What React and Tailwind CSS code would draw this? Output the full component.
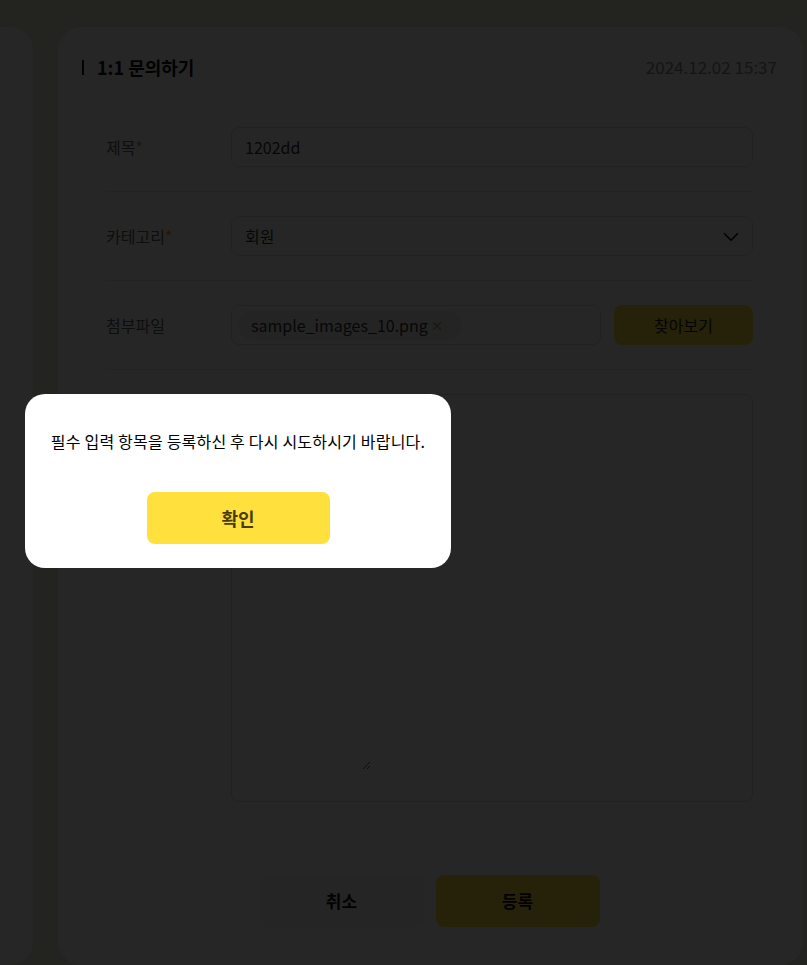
import React from "react";
import { ChevronDown, X } from "lucide-react";

const font = { fontFamily: '"Noto Sans CJK KR", "Noto Sans", sans-serif' };

const Label = ({ children, required }) => (
  <div className="w-[125px] shrink-0 text-[16px] text-[#5e5e5e]">
    {children}
    {required && <span className="text-[#f08c00]">*</span>}
  </div>
);

export default function App() {
  return (
    <div
      className="relative h-[965px] overflow-hidden bg-[#e9f0cf]"
      style={font}
    >
      <div className="flex gap-[25px] pt-[27px] h-full">
        {/* sidebar card (cut off) */}
        <div className="w-[233px] -ml-[200px] shrink-0 rounded-[24px] bg-white" />

        {/* main card */}
        <div className="w-[745px] shrink-0 rounded-[24px] bg-white pl-[24px] pr-[26px] pt-[28px]">
          <div className="flex items-center justify-between h-[24px]">
            <div className="flex items-center gap-[13px]">
              <span className="w-[2px] h-[15px] bg-[#111]" />
              <h2 className="text-[18px] font-semibold text-[#111] leading-none">
                1:1 문의하기
              </h2>
            </div>
            <span className="text-[17px] text-[#8a8a8a]">2024.12.02 15:37</span>
          </div>

          {/* form panel */}
          <div className="mt-[24px] w-[695px] rounded-2xl bg-white px-[24px] shadow-[0_0_6px_rgba(0,0,0,0.04)]">
            <div className="flex items-center py-[24px] border-b border-[#e6e6e6]">
              <Label required>제목</Label>
              <div className="flex-1 h-[40px] rounded-lg border border-[#dcdcdc] bg-white px-[13px] flex items-center text-[16px] text-[#333]">
                1202dd
              </div>
            </div>

            <div className="flex items-center py-[24px] border-b border-[#e6e6e6]">
              <Label required>카테고리</Label>
              <div className="relative flex-1 h-[40px] rounded-lg border border-[#dcdcdc] bg-white px-[13px] flex items-center text-[16px] text-[#333]">
                회원
                <ChevronDown
                  size={26}
                  strokeWidth={1.6}
                  className="absolute right-[8px] top-[7px] text-[#111]"
                />
              </div>
            </div>

            <div className="flex items-center py-[24px] border-b border-[#e6e6e6]">
              <Label>첨부파일</Label>
              <div className="flex-1 flex gap-[13px]">
                <div className="flex-1 h-[40px] rounded-lg border border-[#dcdcdc] bg-white px-[6px] flex items-center">
                  <span className="h-[29px] rounded-full bg-[#f2f2f2] pl-[13px] pr-[18px] flex items-center gap-[2px] text-[16px] text-[#333]">
                    sample_images_10.png
                    <X size={14} strokeWidth={1.8} className="text-[#5a9a2a] mt-[1px]" />
                  </span>
                </div>
                <button className="w-[139px] h-[40px] rounded-lg bg-[#ffe03c] text-[16px] text-[#222]">
                  찾아보기
                </button>
              </div>
            </div>

            <div className="flex items-start py-[24px]">
              <Label required>내용</Label>
              <div className="flex-1 h-[408px] rounded-lg border border-[#dcdcdc] bg-white">
                <textarea className="block w-[139px] h-[375px] bg-transparent outline-none border-0" />
              </div>
            </div>
          </div>

          <div className="mt-[49px] flex justify-center gap-[12px]">
            <button className="w-[164px] h-[52px] rounded-lg bg-[#f5f5f5] text-[17px] font-bold text-[#111]">
              취소
            </button>
            <button className="w-[164px] h-[52px] rounded-lg bg-[#ffe03c] text-[17px] font-bold text-[#111]">
              등록
            </button>
          </div>
        </div>
      </div>

      {/* dim overlay */}
      <div className="absolute inset-0 bg-[rgba(0,0,0,0.85)]" />

      {/* alert modal */}
      <div className="absolute left-[25px] top-[394px] w-[426px] h-[174px] rounded-[20px] bg-white flex flex-col items-center pt-[36px]">
        <p className="text-[16px] leading-[22px] tracking-[0.2px] text-black">
          필수 입력 항목을 등록하신 후 다시 시도하시기 바랍니다.
        </p>
        <button className="mt-[40px] w-[183px] h-[52px] rounded-lg bg-[#ffe03c] text-[18px] font-bold text-[#4a3c0a]">
          확인
        </button>
      </div>
    </div>
  );
}
